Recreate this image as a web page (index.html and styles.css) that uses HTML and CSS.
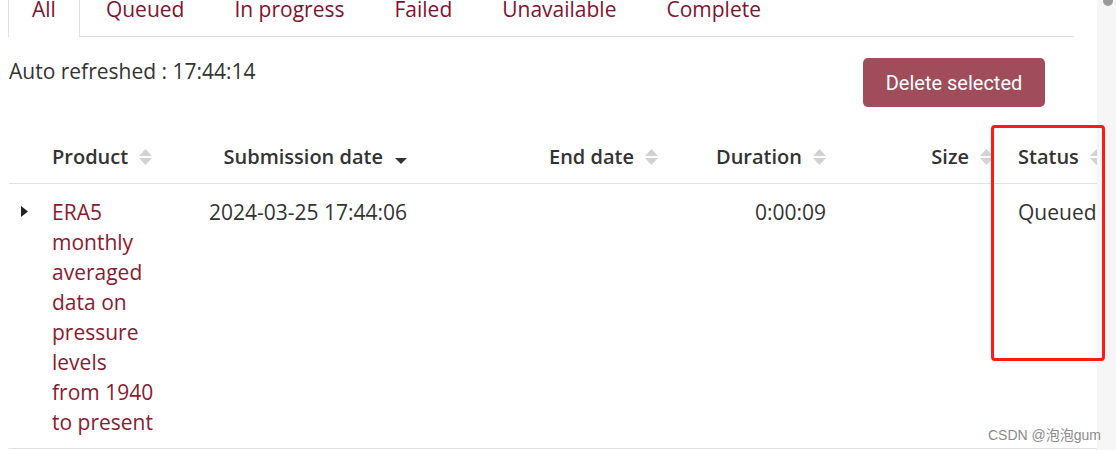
FILE: index.html
```html
<!DOCTYPE html>
<html lang="en">
<head>
<meta charset="utf-8">
<link rel="stylesheet" href="styles.css">
</head>
<body>
<div class="page">
  <div class="content">
    <nav class="tabs">
      <a class="tab active">All</a>
      <a class="tab">Queued</a>
      <a class="tab">In progress</a>
      <a class="tab">Failed</a>
      <a class="tab">Unavailable</a>
      <a class="tab">Complete</a>
    </nav>
    <div class="toolbar">
      <div class="refreshed">Auto refreshed : 17:44:14</div>
      <button class="btn-delete">Delete selected</button>
    </div>
  </div>
  <div class="table">
    <div class="row head">
      <div class="cell c-exp"></div>
      <div class="cell c-product">Product<svg class="sort" viewBox="0 0 13 18"><path d="M0 8L6.5 1L13 8Z"/><path d="M0 10L6.5 17L13 10Z"/></svg></div>
      <div class="cell c-right">Submission date<svg class="caret" viewBox="0 0 12 6"><path d="M0 0L6 6L12 0Z"/></svg></div>
      <div class="cell c-right">End date<svg class="sort" viewBox="0 0 13 18"><path d="M0 8L6.5 1L13 8Z"/><path d="M0 10L6.5 17L13 10Z"/></svg></div>
      <div class="cell c-right">Duration<svg class="sort" viewBox="0 0 13 18"><path d="M0 8L6.5 1L13 8Z"/><path d="M0 10L6.5 17L13 10Z"/></svg></div>
      <div class="cell c-right">Size<svg class="sort" viewBox="0 0 13 18"><path d="M0 8L6.5 1L13 8Z"/><path d="M0 10L6.5 17L13 10Z"/></svg></div>
      <div class="cell c-status">Status<svg class="sort" viewBox="0 0 13 18"><path d="M0 8L6.5 1L13 8Z"/><path d="M0 10L6.5 17L13 10Z"/></svg></div>
    </div>
    <div class="row body">
      <div class="cell c-exp"><svg class="expand" viewBox="0 0 7 11"><path d="M0 0L7 5.5L0 11Z"/></svg></div>
      <div class="cell c-product"><a class="product-link">ERA5 monthly averaged data on pressure levels from 1940 to present</a></div>
      <div class="cell c-right">2024-03-25 17:44:06</div>
      <div class="cell c-right"></div>
      <div class="cell c-right">0:00:09</div>
      <div class="cell c-right"></div>
      <div class="cell c-status">Queued</div>
    </div>
  </div>
  <div class="scrolltrack"><span class="thumb"></span></div>
  <div class="annotation"></div>
  <div class="watermark">CSDN @泡泡gum</div>
</div>
</body>
</html>
```

FILE: styles.css
```css
html, body {
  margin: 0;
  padding: 0;
  background: #fff;
}
body {
  font-family: "Open Sans", "Noto Sans CJK SC", sans-serif;
  font-size: 21px;
  color: #333;
}
.page {
  position: relative;
  width: 1116px;
  height: 450px;
  overflow: hidden;
}
.content {
  width: 1065px;
  margin-left: 9px;
}
.tabs {
  display: flex;
  height: 36px;
  border-bottom: 1px solid #dee2e6;
  margin-left: -1px;
}
.tab {
  display: block;
  padding: 0 23px;
  margin-right: 2px;
  margin-top: -6px;
  line-height: 28px;
  height: 42px;
  color: #7e1430;
  font-weight: 500;
  border: 1px solid transparent;
  border-bottom: none;
  box-sizing: border-box;
}
.tab.active {
  border-color: #dee2e6;
  background: #fff;
  height: 43px;
  position: relative;
}
.toolbar {
  display: flex;
  justify-content: space-between;
  align-items: flex-start;
  margin-top: 21px;
}
.refreshed {
  line-height: 28px;
  margin-top: -1px;
}
.btn-delete {
  margin-right: 29px;
  width: 182px;
  height: 49px;
  border: none;
  border-radius: 5px;
  background: #a04c5a;
  color: #fff;
  font-family: Roboto, "Liberation Sans", sans-serif;
  font-size: 20px;
  padding: 0;
}
.table {
  margin-left: 9px;
  margin-top: 23px;
  width: 1088px;
  overflow: hidden;
}
.row {
  display: grid;
  grid-template-columns: 35px 156px 215px 251px 168px 167px 108px;
  border-bottom: 1px solid #dee2e6;
}
.row.head {
  height: 53px;
  align-items: center;
  font-weight: 600;
  font-size: 20px;
}
.row.head .cell {
  display: flex;
  align-items: center;
}
.row.head .c-right {
  justify-content: flex-end;
}
.row.body {
  padding: 13px 0 11px;
  line-height: 30px;
  align-items: start;
}
.cell {
  white-space: nowrap;
}
.c-product {
  padding-left: 8px;
  white-space: normal;
}
.c-right {
  text-align: right;
  padding-right: 8px;
}
.c-status {
  padding-left: 17px;
}
.product-link {
  display: block;
  width: 106px;
  color: #8b1a30;
  text-decoration: none;
}
.sort {
  width: 13px;
  height: 18px;
  margin-left: 11px;
  fill: #d2d2d2;
  flex: none;
}
.caret {
  width: 12px;
  height: 6px;
  margin-left: 12px;
  margin-top: 8px;
  fill: #333;
  flex: none;
}
.expand {
  display: block;
  width: 7px;
  height: 11px;
  margin: 9px 0 0 12px;
  fill: #222;
}
.annotation {
  position: absolute;
  left: 991px;
  top: 125px;
  width: 108px;
  height: 230px;
  border: 3px solid #ff1a1a;
  border-radius: 4px;
}
.scrolltrack {
  position: absolute;
  right: 0;
  top: 0;
  width: 19px;
  height: 450px;
  background: #f6f6f6;
}
.thumb {
  position: absolute;
  left: 6px;
  top: -4px;
  width: 10px;
  height: 10px;
  border-radius: 50%;
  background: #9a9a9a;
}
.watermark {
  position: absolute;
  left: 988px;
  top: 424px;
  font-family: "Liberation Sans", "Noto Sans CJK SC", sans-serif;
  font-size: 14px;
  color: #8a8a8a;
}
```
